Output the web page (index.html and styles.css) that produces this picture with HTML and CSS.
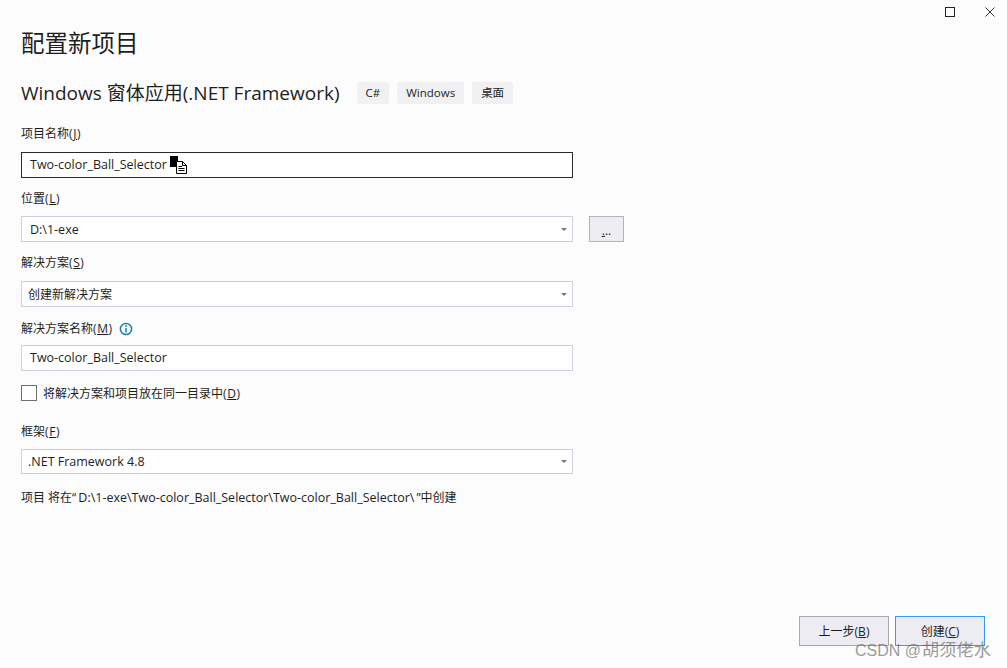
FILE: index.html
```html
<!DOCTYPE html>
<html lang="zh-CN">
<head>
<meta charset="utf-8">
<title>配置新项目</title>
<link rel="stylesheet" href="styles.css">
</head>
<body>
<div class="window">
  <div class="titlebar">
    <svg class="winbtn max" width="10" height="10" viewBox="0 0 10 10"><rect x="0.5" y="0.5" width="9" height="9" fill="none" stroke="#222" stroke-width="1"/></svg>
    <svg class="winbtn close" width="10" height="10" viewBox="0 0 10 10"><path d="M0.5 0.5L9.5 9.5M9.5 0.5L0.5 9.5" fill="none" stroke="#333" stroke-width="1"/></svg>
  </div>
  <main class="content">
    <h1 class="title">配置新项目</h1>
    <div class="subhead">
      <h2 class="subtitle">Windows 窗体应用(.NET Framework)</h2>
      <div class="tags">
        <span class="tag">C#</span>
        <span class="tag">Windows</span>
        <span class="tag">桌面</span>
      </div>
    </div>
    <div class="field f-name">
      <label class="label">项目名称<span class="key">(<u>J</u>)</span></label>
      <div class="input focus">
        <span>Two-color_Ball_Selector</span>
        <svg class="cursor-icon" width="17" height="18" viewBox="0 0 17 18">
          <path d="M0 0H8V5H6V11H0Z" fill="#000"/>
          <path d="M6.5 5.5H12.5L16.5 9.5V17.5H6.5Z" fill="#fff" stroke="#000"/>
          <path d="M12.5 5.5V9.5H16.5M8.5 10.5H12M8.5 12.5H14.5M8.5 14.5H14.5" fill="none" stroke="#000"/>
        </svg>
      </div>
    </div>
    <div class="field f-loc">
      <label class="label">位置<span class="key">(<u>L</u>)</span></label>
      <div class="row">
        <div class="input select"><span>D:\1-exe</span><i class="caret"></i></div>
        <button class="browse"><u>.</u>..</button>
      </div>
    </div>
    <div class="field f-sol">
      <label class="label">解决方案<span class="key">(<u>S</u>)</span></label>
      <div class="input select tight cjk"><span>创建新解决方案</span><i class="caret"></i></div>
    </div>
    <div class="field f-solname">
      <label class="label">解决方案名称<span class="key">(<u>M</u>)</span>
        <svg class="info" width="14" height="14" viewBox="0 0 14 14"><circle cx="7" cy="7" r="5.6" fill="none" stroke="#1a7fa8" stroke-width="1.5"/><path d="M7 6V10.5" stroke="#1a7fa8" stroke-width="1.5"/><rect x="6.2" y="3.4" width="1.6" height="1.6" fill="#1a7fa8"/></svg>
      </label>
      <div class="input"><span>Two-color_Ball_Selector</span></div>
    </div>
    <div class="check">
      <span class="box"></span>
      <span class="label">将解决方案和项目放在同一目录中<span class="key">(<u>D</u>)</span></span>
    </div>
    <div class="field f-fw">
      <label class="label">框架<span class="key">(<u>F</u>)</span></label>
      <div class="input select tight"><span>.NET Framework 4.8</span><i class="caret"></i></div>
    </div>
    <p class="note">项目 将在“<span class="path">D:\1-exe\Two-color_Ball_Selector\Two-color_Ball_Selector\</span>”中创建</p>
  </main>
  <footer class="actions">
    <button class="btn">上一步(<u>B</u>)</button>
    <button class="btn primary">创建(<u>C</u>)</button>
  </footer>
  <div class="watermark">CSDN @<span class="wm-name">胡须佬水</span></div>
</div>
</body>
</html>
```
FILE: styles.css
```css
* { box-sizing: border-box; }
html, body { margin: 0; height: 100%; }
body {
  background: #fcfcfd;
  color: #1e1e1e;
  font-family: "Open Sans", "Noto Sans CJK SC", sans-serif;
  font-size: 12px;
  overflow: hidden;
}
.window {
  position: relative;
  width: 1007px;
  height: 668px;
  display: flex;
  flex-direction: column;
}
.titlebar {
  height: 17px;
  padding: 7px 12px 0 0;
  display: flex;
  justify-content: flex-end;
  gap: 30px;
  flex: none;
}
.winbtn { flex: none; }
.content { padding: 0 0 0 21px; flex: 1; }
.title {
  margin: 8px 0 0;
  font-size: 23.5px;
  font-weight: 400;
  line-height: 36px;
  color: #1e1e1e;
}
.subhead {
  display: flex;
  align-items: center;
  margin-top: 20px;
  height: 24px;
}
.subtitle {
  margin: 0;
  font-size: 19px;
  font-weight: 400;
  line-height: 24px;
  white-space: nowrap;
}
.tags { display: flex; gap: 8px; margin-left: 17px; }
.tag {
  height: 22px;
  line-height: 21px;
  padding: 0 9px;
  background: #f1f1f3;
  border-radius: 3px;
  font-size: 11.5px;
}
.field { display: flex; flex-direction: column; }
.label {
  display: block;
  line-height: 16px;
  font-size: 12px;
  color: #1e1e1e;
  margin-bottom: 9px;
}
.key { letter-spacing: 0.6px; }
.f-name { margin-top: 21px; }
.f-name .label { margin-bottom: 10px; }
.f-loc { margin-top: 13px; }
.f-sol { margin-top: 13px; }
.f-sol .label { margin-bottom: 10px; }
.f-solname { margin-top: 14px; }
.f-solname .label { margin-bottom: 8px; }
.f-fw { margin-top: 23px; }
.f-fw .input { height: 25px; }
.f-fw .caret { top: 10px; }
.row { display: flex; align-items: flex-start; gap: 16px; }
.input {
  position: relative;
  width: 552px;
  height: 26px;
  background: #fff;
  border: 1px solid #ccd0de;
  padding: 0 8px;
  display: flex;
  align-items: center;
  line-height: 24px;
  font-size: 12.5px;
  flex: none;
}
.input.focus { border-color: #2b2b2b; }
.input.tight { padding-left: 6px; }
.input.cjk { font-size: 12px; }
.f-loc .input, .f-sol .input { padding-top: 2px; }
.caret {
  position: absolute;
  right: 5px;
  top: 11px;
  width: 0;
  height: 0;
  border-left: 3px solid transparent;
  border-right: 3px solid transparent;
  border-top: 3px solid #777;
}
.browse {
  width: 35px;
  height: 26px;
  padding: 0;
  background: #ececf2;
  border: 1px solid #b4b4b8;
  font: inherit;
  font-size: 12px;
  line-height: 28px;
  color: #1e1e1e;
}
.cursor-icon { position: absolute; left: 148px; top: 3px; }
.info { vertical-align: -3px; margin-left: 3px; }
.check {
  display: flex;
  align-items: center;
  gap: 6px;
  margin-top: 14px;
  height: 16px;
}
.check .label { margin: 2px 0 0; }
.box {
  width: 16px;
  height: 16px;
  border: 1px solid #6f6f6f;
  background: #fff;
  flex: none;
}
.note { margin: 16px 0 0; line-height: 16px; font-size: 12px; }
.path { font-size: 12.5px; margin: 0 2px; }
.actions {
  position: absolute;
  right: 22px;
  bottom: 22px;
  display: flex;
  gap: 6px;
}
.btn {
  width: 90px;
  height: 30px;
  padding: 0;
  background: #ececf2;
  border: 1px solid #a9a9ad;
  font: inherit;
  font-size: 12px;
  color: #1e1e1e;
}
.btn.primary { border-color: #3399ff; }
.watermark {
  position: absolute;
  left: 855px;
  top: 639px;
  font-size: 16px;
  line-height: 22px;
  color: rgba(90, 90, 90, 0.62);
  font-family: "Liberation Sans", "Noto Sans CJK SC", sans-serif;
  white-space: nowrap;
}
.wm-name { font-size: 17.25px; margin-left: 1px; }
```
